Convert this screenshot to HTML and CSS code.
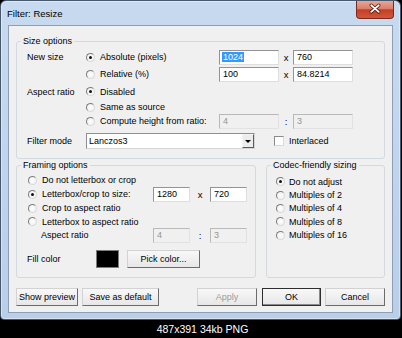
FILE: index.html
```html
<!DOCTYPE html>
<html lang="en">
  <head>
    <meta charset="UTF-8" />
    <meta name="viewport" content="width=device-width, initial-scale=1.0" />
    <title>Filter: Resize</title>
    <link rel="stylesheet" href="styles.css">
  </head>
  <body>
    <div class="window">
      <header class="titlebar">
        <span class="title">Filter: Resize</span>
        <span class="close">
          <svg width="38" height="17" viewBox="0 0 38 17">
            <path d="M15 4 L23 11 M23 4 L15 11" stroke="#5a1d12" stroke-width="3.6" stroke-linecap="round" fill="none" />
            <path d="M15 4 L23 11 M23 4 L15 11" stroke="#ffffff" stroke-width="1.8" stroke-linecap="round" fill="none" />
          </svg>
        </span>
      </header>

      <div class="client">
        <fieldset class="group size-group">
          <legend>Size options</legend>
          <div class="size-grid">
            <span class="label">New size</span>
            <span class="option"><i class="radio on"></i>Absolute (pixels)</span>
            <span class="field"><span class="selected">1024</span></span>
            <span class="sep">x</span>
            <span class="field">760</span>

            <span></span>
            <span class="option"><i class="radio"></i>Relative (%)</span>
            <span class="field">100</span>
            <span class="sep">x</span>
            <span class="field">84.8214</span>

            <span class="label">Aspect ratio</span>
            <span class="option wide"><i class="radio on"></i>Disabled</span>

            <span></span>
            <span class="option wide"><i class="radio"></i>Same as source</span>

            <span></span>
            <span class="option"><i class="radio"></i>Compute height from ratio:</span>
            <span class="field off">4</span>
            <span class="sep">:</span>
            <span class="field off">3</span>
          </div>
          <div class="filter-row">
            <span class="label">Filter mode</span>
            <span class="select">
              <span class="select-text">Lanczos3</span>
              <span class="drop"><i class="arrow"></i></span>
            </span>
            <span class="check"><i class="box"></i>Interlaced</span>
          </div>
        </fieldset>

        <div class="lower">
          <fieldset class="group frame-group">
            <legend>Framing options</legend>
            <div class="frame-grid">
              <span class="option wide"><i class="radio"></i>Do not letterbox or crop</span>

              <span class="option"><i class="radio on"></i>Letterbox/crop to size:</span>
              <span class="field">1280</span>
              <span class="sep">x</span>
              <span class="field">720</span>

              <span class="option wide"><i class="radio"></i>Crop to aspect ratio</span>
              <span class="option wide"><i class="radio"></i>Letterbox to aspect ratio</span>

              <span class="sub-label">Aspect ratio</span>
              <span class="field off">4</span>
              <span class="sep">:</span>
              <span class="field off">3</span>
            </div>
            <div class="fill-row">
              <span class="fill-label">Fill color</span>
              <span class="swatch"></span>
              <button class="button pick">Pick color...</button>
            </div>
          </fieldset>

          <fieldset class="group codec-group">
            <legend>Codec-friendly sizing</legend>
            <div class="codec-list">
              <span class="option"><i class="radio on"></i>Do not adjust</span>
              <span class="option"><i class="radio"></i>Multiples of 2</span>
              <span class="option"><i class="radio"></i>Multiples of 4</span>
              <span class="option"><i class="radio"></i>Multiples of 8</span>
              <span class="option"><i class="radio"></i>Multiples of 16</span>
            </div>
          </fieldset>
        </div>

        <div class="actions">
          <button class="button preview">Show preview</button>
          <button class="button save">Save as default</button>
          <button class="button apply" disabled>Apply</button>
          <button class="button ok">OK</button>
          <button class="button cancel">Cancel</button>
        </div>
      </div>
    </div>

    <div class="caption">487x391 34kb PNG</div>
  </body>
</html>
```

FILE: styles.css
```css
* {
  box-sizing: border-box;
}

body {
  margin: 0px;
  width: 402px;
  background-color: #000;
  font-family: "Liberation Sans", Arial, sans-serif;
  font-size: 9px;
  color: #000;
}

.window {
  width: 401px;
  border: 1px solid #46586c;
  border-radius: 6px 6px 4px 4px;
  background: linear-gradient(#c7daef, #b9cfe8);
  box-shadow: inset 0 0 0 1px rgba(255, 255, 255, 0.4);
  padding: 0px 7px 6px 7px;
}

.titlebar {
  display: flex;
  align-items: flex-start;
  height: 24px;
  margin: 0px -7px;
  padding: 0px 6px;
}

.title {
  font-size: 9.5px;
  line-height: 12px;
  margin-top: 7px;
  color: #000;
}

.close {
  margin-left: auto;
  width: 38px;
  height: 18px;
  border: 1px solid #7a2a1c;
  border-top: 0px;
  border-radius: 0px 0px 4px 4px;
  background: linear-gradient(#e8a697 0%, #d9806b 45%, #c43e25 52%, #d2583a 100%);
  display: flex;
  align-items: center;
  justify-content: center;
}

.client {
  height: 288px;
  border: 1px solid #8c9fb6;
  background-color: #f0f0f0;
  padding: 9px 7px 0px 7px;
}

/* group boxes */
.group {
  margin: 0px;
  min-width: 0;
  border: 1px solid #d3d9de;
  border-radius: 3px;
  padding: 2px 0px 9px 0px;
}

.group legend {
  margin-left: 4px;
  padding: 0px 2px;
  line-height: 12px;
  font-size: 9px;
}

.option {
  display: flex;
  align-items: center;
  white-space: nowrap;
}

.option.wide {
  grid-column: 2 / -1;
}

.label {
  display: flex;
  align-items: center;
}

.radio {
  display: inline-flex;
  align-items: center;
  justify-content: center;
  flex: none;
  width: 9px;
  height: 9px;
  margin-right: 5px;
  border: 1px solid;
  border-color: #7d7d7d #d9d9d9 #d9d9d9 #7d7d7d;
  border-radius: 50%;
  background: radial-gradient(#ffffff, #ececec);
}

.radio.on::after {
  content: "";
  width: 3px;
  height: 3px;
  border-radius: 50%;
  background-color: #111;
}

.field {
  height: 15px;
  border: 1px solid;
  border-color: #939393 #dedede #dedede #939393;
  background-color: #fff;
  padding-left: 3px;
  line-height: 13px;
  white-space: nowrap;
}

.field.off {
  background-color: #f0f0f0;
  border-color: #b9b9b9 #e2e2e2 #e2e2e2 #b9b9b9;
  color: #959595;
}

.selected {
  background-color: #3399ff;
  color: #fff;
  padding: 0px 1px;
  margin-left: -1px;
}

.sep {
  text-align: center;
  font-size: 9.5px;
}

/* size options */
.size-grid {
  display: grid;
  grid-template-columns: 59px 133px 60px 14px 60px;
  grid-template-rows: 16px 18px 17px 14px 14px;
  align-items: center;
  margin-left: 10px;
}

.filter-row {
  display: flex;
  align-items: center;
  height: 16px;
  margin: 5px 0px 0px 10px;
}

.filter-row .label {
  width: 59px;
}

.select {
  display: flex;
  align-items: center;
  width: 169px;
  height: 16px;
  border: 1px solid;
  border-color: #8f8f8f #d6d6d6 #d6d6d6 #8f8f8f;
  background-color: #fff;
}

.select-text {
  flex: 1;
  padding-left: 2px;
}

.drop {
  display: flex;
  align-items: center;
  justify-content: center;
  width: 12px;
  height: 14px;
  border: 1px solid;
  border-color: #f4f4f4 #5c5c5c #5c5c5c #f4f4f4;
  background-color: #ececec;
}

.arrow {
  width: 0px;
  height: 0px;
  border-left: 3px solid transparent;
  border-right: 3px solid transparent;
  border-top: 3px solid #000;
  margin-top: 1px;
}

.check {
  display: flex;
  align-items: center;
  margin-left: 19px;
}

.box {
  width: 10px;
  height: 10px;
  margin-right: 5px;
  border: 1px solid;
  border-color: #8a8a8a #dadada #dadada #8a8a8a;
  background-color: #fff;
}

/* lower groups */
.lower {
  display: grid;
  grid-template-columns: 240px 1fr;
  column-gap: 10px;
}

.frame-grid {
  display: grid;
  grid-template-columns: 125px 37px 20px 37px;
  grid-template-rows: 14px 14px 14px 13px 14px;
  align-items: center;
  margin-left: 11px;
}

.frame-grid .option.wide {
  grid-column: 1 / -1;
}

.sub-label {
  padding-left: 13px;
}

.fill-row {
  display: flex;
  align-items: center;
  height: 19px;
  margin: 7px 0px 0px 10px;
}

.fill-label {
  width: 69px;
}

.swatch {
  width: 23px;
  height: 18px;
  margin-right: 8px;
  border: 1px solid #7c7c7c;
  background-color: #000;
}

.codec-list {
  display: grid;
  grid-template-rows: repeat(5, 13.4px);
  align-items: center;
  margin: 2px 0px 0px 9px;
}

.codec-list .radio {
  margin-right: 4px;
}

/* buttons */
.button {
  height: 18px;
  padding: 0px;
  font-family: "Liberation Sans", Arial, sans-serif;
  font-size: 9px;
  color: #000;
  border: 1px solid;
  border-color: #d2d2d2 #6c6c6c #6c6c6c #d2d2d2;
  background: linear-gradient(#f8f8f8, #e7e7e7);
}

.pick {
  width: 73px;
}

.actions {
  display: flex;
  gap: 4px;
  margin-top: 10px;
}

.preview {
  width: 62px;
}

.save {
  width: 77px;
}

.apply {
  width: 60px;
  margin-left: auto;
  color: #9c9c9c;
}

.ok {
  width: 59px;
  margin-left: 1px;
  border-color: #2e2e2e;
  box-shadow: inset -1px -1px 0 #8a8a8a;
}

.cancel {
  width: 60px;
}

.caption {
  height: 18px;
  line-height: 18px;
  text-align: center;
  padding-left: 3px;
  color: #fff;
  font-size: 10.5px;
}
```
